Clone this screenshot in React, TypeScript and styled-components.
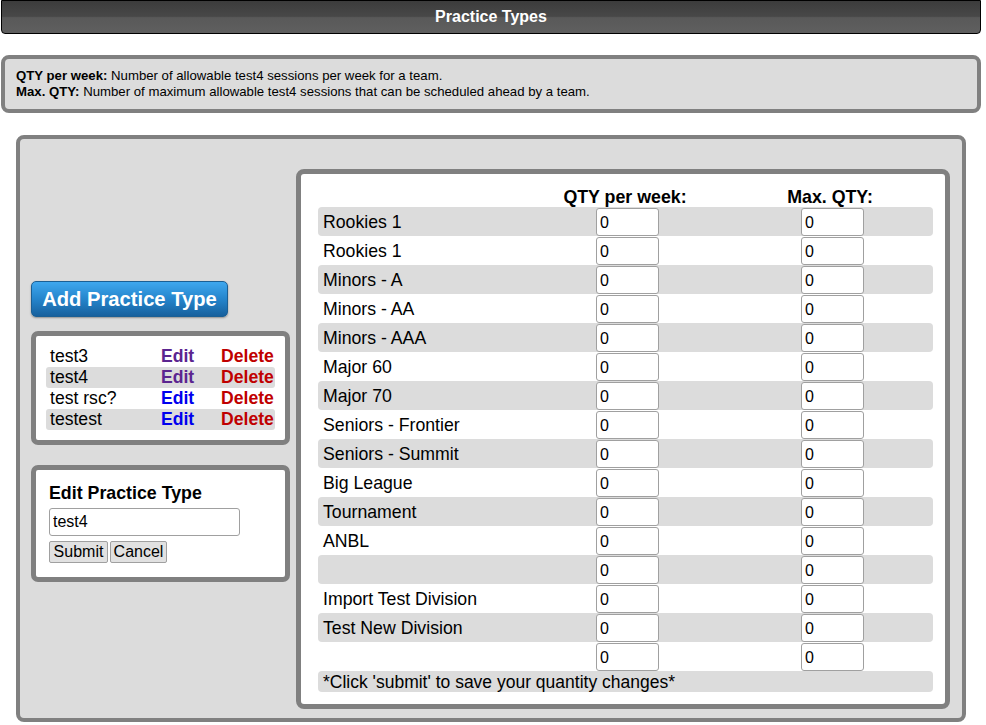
import React from 'react';
import styled, { createGlobalStyle } from 'styled-components';

/* ─── Global ─────────────────────────────────────────────────────── */
const GlobalStyle = createGlobalStyle`
  html, body { margin: 0; padding: 0; background: #fff; }
  body {
    font-family: "Liberation Sans", Arial, sans-serif;
    color: #000;
  }
`;

/* ─── Styled ──────────────────────────────────────────────────────── */
const Page = styled.div`
  width: 980px;
  margin-left: 1px;
`;

const TitleBar = styled.div`
  height: 34px;
  box-sizing: border-box;
  border: 1px solid #000;
  border-radius: 0 0 4px 4px;
  background: linear-gradient(to bottom, #3c3c3c 0%, #484848 48%, #595959 52%, #5f5f5f 100%);
  display: flex;
  align-items: center;
  justify-content: center;
  color: #fff;
  font-weight: 700;
  font-size: 16px;
`;

const InfoBox = styled.div`
  margin-top: 21px;
  height: 58px;
  box-sizing: border-box;
  border: 4px solid #808080;
  border-radius: 8px;
  background: #dcdcdc;
  padding: 9px 0 0 11px;
  font-size: 13.2px;
  line-height: 16px;
`;

const MainBox = styled.div`
  margin: 22px 0 0 15px;
  width: 950px;
  box-sizing: border-box;
  border: 4px solid #808080;
  border-radius: 8px;
  background: #dcdcdc;
  padding: 30px 11px 9px 11px;
  display: flex;
  align-items: flex-start;
  gap: 6px;
`;

const LeftColumn = styled.div`
  width: 259px;
  margin-top: 112px;
  display: flex;
  flex-direction: column;
  align-items: flex-start;
`;

const AddButton = styled.button`
  width: 197px;
  height: 36px;
  border: 1px solid #1b5f94;
  border-radius: 5px;
  background: linear-gradient(to bottom, #3ea7ee 0%, #2585cc 50%, #17609d 100%);
  box-shadow: 0 1px 2px rgba(0, 0, 0, 0.35);
  color: #fff;
  font-family: "Liberation Sans", Arial, sans-serif;
  font-weight: 700;
  font-size: 20.2px;
  padding: 0;
  cursor: pointer;
`;

const WhiteBox = styled.div<{ $mt: number }>`
  width: 259px;
  box-sizing: border-box;
  margin-top: ${({ $mt }) => $mt}px;
  border: 5px solid #808080;
  border-radius: 7px;
  background: #fff;
`;

const TypeList = styled.div`
  padding: 10px;
`;

const TypeRow = styled.div<{ $shade: boolean }>`
  display: grid;
  grid-template-columns: 111px 60px 1fr;
  height: 21px;
  align-items: center;
  padding-left: 4px;
  border-radius: 3px;
  background: ${({ $shade }) => ($shade ? '#dcdcdc' : 'transparent')};
  font-size: 17.6px;
`;

const EditLink = styled.a<{ $visited: boolean }>`
  font-weight: 700;
  color: ${({ $visited }) => ($visited ? '#5b2590' : '#0000ee')};
  text-decoration: none;
`;

const DeleteLink = styled.a`
  font-weight: 700;
  color: #c00000;
  text-decoration: none;
`;

const EditForm = styled.div`
  padding: 13px 13px 14px 13px;
`;

const EditTitle = styled.div`
  font-weight: 700;
  font-size: 17.8px;
  line-height: 20px;
`;

const NameInput = styled.input`
  display: block;
  margin-top: 5px;
  width: 191px;
  height: 28px;
  box-sizing: border-box;
  border: 1px solid #a0a0a0;
  border-radius: 3px;
  padding: 0 3px;
  font-family: "Liberation Sans", Arial, sans-serif;
  font-size: 16px;
  color: #000;
`;

const ButtonRow = styled.div`
  display: flex;
  gap: 2px;
  margin-top: 5px;
`;

const FormButton = styled.button<{ $w: number }>`
  width: ${({ $w }) => $w}px;
  height: 22px;
  box-sizing: border-box;
  border: 1px solid #a0a0a0;
  border-radius: 2px;
  background: #e1e1e1;
  font-family: "Liberation Sans", Arial, sans-serif;
  font-size: 16px;
  color: #000;
  padding: 0;
`;

const QtyPanel = styled.div`
  width: 654px;
  box-sizing: border-box;
  border: 5px solid #808080;
  border-radius: 8px;
  background: #fff;
  padding: 13px 12px 12px 17px;
`;

const QtyGrid = styled.div`
  display: grid;
  grid-template-columns: 242px 130px 75px 130px 1fr;
`;

const HeadCell = styled.div<{ $col: number }>`
  grid-column: ${({ $col }) => $col};
  height: 20px;
  line-height: 20px;
  text-align: center;
  font-weight: 700;
  font-size: 17.8px;
  white-space: nowrap;
`;

const QtyRow = styled.div<{ $shade: boolean }>`
  grid-column: 1 / -1;
  display: grid;
  grid-template-columns: subgrid;
  height: 29px;
  align-items: start;
  border-radius: 4px;
  background: ${({ $shade }) => ($shade ? '#dcdcdc' : 'transparent')};
`;

const RowLabel = styled.div`
  grid-column: 1;
  padding: 1px 0 0 5px;
  font-size: 17.7px;
  line-height: 29px;
  white-space: nowrap;
`;

const QtyInput = styled.input<{ $col: number }>`
  grid-column: ${({ $col }) => $col};
  margin: 1px 0 0 36px;
  width: 63px;
  height: 28px;
  box-sizing: border-box;
  border: 1px solid #a0a0a0;
  border-radius: 3px;
  padding: 2px 3px 0;
  font-family: "Liberation Sans", Arial, sans-serif;
  font-size: 16px;
  color: #000;
  background: #fff;
`;

const FootNote = styled.div`
  grid-column: 1 / -1;
  height: 21px;
  line-height: 22px;
  border-radius: 4px;
  background: #dcdcdc;
  padding-left: 5px;
  font-size: 17.5px;
`;

/* ─── Data ───────────────────────────────────────────────────────── */
const practiceTypes = [
  { name: 'test3', visited: true },
  { name: 'test4', visited: true },
  { name: 'test rsc?', visited: false },
  { name: 'testest', visited: false },
];

const divisions = [
  'Rookies 1',
  'Rookies 1',
  'Minors - A',
  'Minors - AA',
  'Minors - AAA',
  'Major 60',
  'Major 70',
  'Seniors - Frontier',
  'Seniors - Summit',
  'Big League',
  'Tournament',
  'ANBL',
  '',
  'Import Test Division',
  'Test New Division',
  '',
];

/* ─── Component ──────────────────────────────────────────────────── */
export default function App() {
  return (
    <>
      <GlobalStyle />
      <Page>
        <TitleBar>Practice Types</TitleBar>

        <InfoBox>
          <div><b>QTY per week:</b> Number of allowable test4 sessions per week for a team.</div>
          <div><b>Max. QTY:</b> Number of maximum allowable test4 sessions that can be scheduled ahead by a team.</div>
        </InfoBox>

        <MainBox>
          <LeftColumn>
            <AddButton>Add Practice Type</AddButton>

            <WhiteBox $mt={14}>
              <TypeList>
                {practiceTypes.map((t, i) => (
                  <TypeRow key={i} $shade={i % 2 === 1}>
                    <span>{t.name}</span>
                    <EditLink href="#" $visited={t.visited}>Edit</EditLink>
                    <DeleteLink href="#">Delete</DeleteLink>
                  </TypeRow>
                ))}
              </TypeList>
            </WhiteBox>

            <WhiteBox $mt={20}>
              <EditForm>
                <EditTitle>Edit Practice Type</EditTitle>
                <NameInput defaultValue="test4" />
                <ButtonRow>
                  <FormButton $w={59}>Submit</FormButton>
                  <FormButton $w={57}>Cancel</FormButton>
                </ButtonRow>
              </EditForm>
            </WhiteBox>
          </LeftColumn>

          <QtyPanel>
            <QtyGrid>
              <HeadCell $col={2}>QTY per week:</HeadCell>
              <HeadCell $col={4}>Max. QTY:</HeadCell>
              {divisions.map((d, i) => (
                <QtyRow key={i} $shade={i % 2 === 0 && i !== 15}>
                  <RowLabel>{d}</RowLabel>
                  <QtyInput $col={2} defaultValue="0" />
                  <QtyInput $col={4} defaultValue="0" />
                </QtyRow>
              ))}
              <FootNote>*Click 'submit' to save your quantity changes*</FootNote>
            </QtyGrid>
          </QtyPanel>
        </MainBox>
      </Page>
    </>
  );
}
